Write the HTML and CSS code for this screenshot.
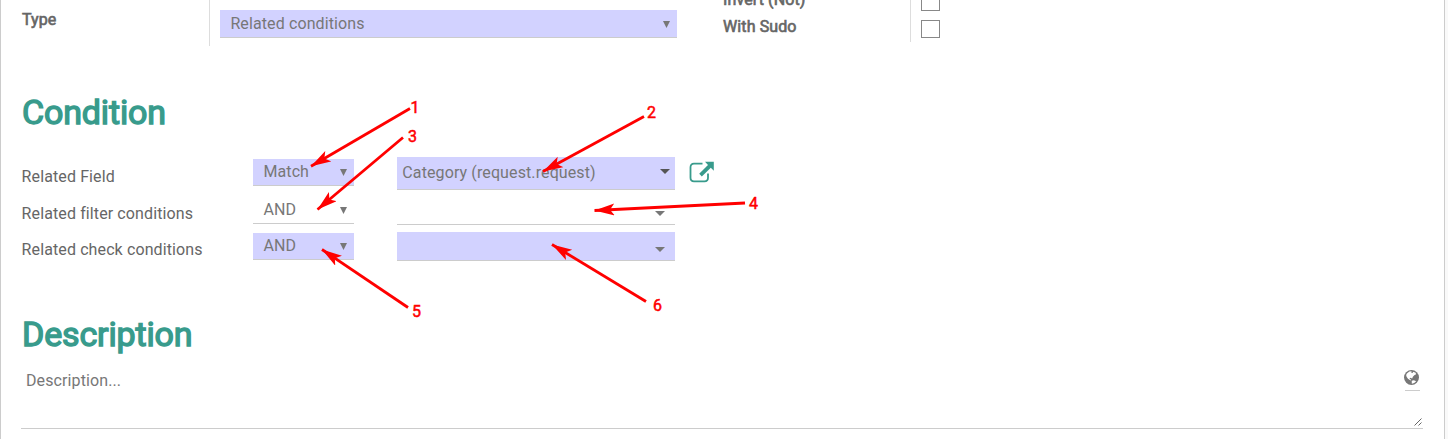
FILE: index.html
```html
<!DOCTYPE html>
<html lang="en">
<head>
<meta charset="utf-8">
<title>Condition</title>
<link rel="stylesheet" href="styles.css">
</head>
<body>
<main class="sheet">
  <section class="top">
    <div class="label type-label">Type</div>
    <div class="type-cell"><div class="select filled type-select"><span>Related conditions</span><svg class="tri" viewBox="0 0 7 7"><path d="M0 0H7L3.5 7Z"/></svg></div></div>
    <div class="flags">
      <div class="label">Invert (Not)</div>
      <div class="label">With Sudo</div>
    </div>
    <div class="checks"><span class="check"></span><span class="check"></span></div>
  </section>
  <h1 class="condition-title">Condition</h1>
  <section class="rows">
    <div class="row row-field">
      <div class="name">Related Field</div>
      <div class="select filled op"><span>Match</span><svg class="tri" viewBox="0 0 7 7"><path d="M0 0H7L3.5 7Z"/></svg></div>
      <div class="combo filled"><span>Category (request.request)</span><svg class="caret" viewBox="0 0 10 5"><path d="M0 0H10L5 5Z"/></svg></div>
      <svg class="open" viewBox="0 0 26 24"><path class="box" d="M13.500 3.700H5Q1.500 3.700 1.500 7.200V17.800Q1.500 21.300 5 21.300H15.500Q19 21.300 19 17.800V13.500"/><path class="arrow" d="M16 1.800H24.800V10.800L21.800 7.800L12.800 16.400L10.200 13.800L19 5Z"/></svg>
    </div>
    <div class="row row-filter">
      <div class="name">Related filter conditions</div>
      <div class="select op"><span>AND</span><svg class="tri" viewBox="0 0 7 7"><path d="M0 0H7L3.5 7Z"/></svg></div>
      <div class="combo"><svg class="caret" viewBox="0 0 10 5"><path d="M0 0H10L5 5Z"/></svg></div>
    </div>
    <div class="row row-check">
      <div class="name">Related check conditions</div>
      <div class="select filled op"><span>AND</span><svg class="tri" viewBox="0 0 7 7"><path d="M0 0H7L3.5 7Z"/></svg></div>
      <div class="combo filled"><svg class="caret" viewBox="0 0 10 5"><path d="M0 0H10L5 5Z"/></svg></div>
    </div>
  </section>
  <h1 class="description-title">Description</h1>
  <div class="textarea">
    <span>Description...</span>
    <div class="tools">
      <div class="translate"><svg viewBox="0 0 14 14"><circle cx="7" cy="7" r="7" class="sea"/><path class="land" d="M2.7 3.2L5 1.4L7.2 1.2L6.6 2.4L8 2.8L8.7 1.6L10.8 2.5L11.3 4L9.6 5L8.3 6.4L7.6 7.9L5.9 7.2L5.1 8L6.6 9L6.2 9.8L3.7 8.2L2.4 6.2L2 4.6ZM7.2 10L9.2 9.5L11.4 10.5L9.5 12.2L7.3 12.8Z"/></svg></div>
      <svg class="grip" viewBox="0 0 8 8"><path d="M.5 7.5L7.5 .5M4.5 7.5L7.5 4.5"/></svg>
    </div>
  </div>
</main>
<svg class="notes" viewBox="0 0 1448 439">
  <defs><marker id="head" markerUnits="userSpaceOnUse" markerWidth="22" markerHeight="14" refX="20" refY="6" orient="auto"><path d="M20 6L0 0L4.500 6L0 12Z"/></marker></defs>
  <g class="arrows">
    <path d="M410 108.500L311 166.300"/>
    <path d="M403 137.500L317.500 209.500"/>
    <path d="M644 116.500L543 171.500"/>
    <path d="M745 203L594.500 210.500"/>
    <path d="M408 307.500L322 249.500"/>
    <path d="M646 301.500L552 244.500"/>
  </g>
  <g class="digits">
    <text x="410.500" y="113">1</text><text x="408" y="142">3</text><text x="647" y="118">2</text>
    <text x="749" y="209">4</text><text x="412" y="317">5</text><text x="653" y="311">6</text>
  </g>
</svg>
</body>
</html>
```
FILE: styles.css
```css
* { box-sizing: border-box; }
body { margin: 0; height: 439px; overflow: hidden; background: #f9f9f9; font: 16px/20px Roboto, sans-serif; letter-spacing: .11px; color: #666; }
.sheet { width: 1445px; height: 439px; padding: 0 21px 0 20px; background: #fff; border-left: 1px solid #ccc; border-right: 1px solid #ccc; display: flex; flex-direction: column; }
.top { display: grid; grid-template-columns: 188px 514px 188px auto; height: 46px; align-items: start; }
.label { font-weight: 400; -webkit-text-stroke: .65px #666; line-height: 20px; }
.type-label { padding: 10px 0 0 1px; }
.type-cell { height: 46px; padding: 10px 0 0 10px; border-left: 1px solid #ddd; }
.select { display: flex; justify-content: space-between; align-items: center; padding: 0 7px 0 10.4px; border-bottom: 1px solid #ccc; color: #777; }
.filled { background: #d2d2ff; }
.type-select { width: 457px; height: 28px; padding-top: 1px; }
.tri { width: 7px; height: 7px; fill: #777; }
.flags { display: grid; gap: 7px; margin-top: -10px; }
.checks { height: 42px; padding: 0 0 0 10px; border-left: 1px solid #ddd; display: grid; align-content: start; gap: 9px; margin-left: -1px; }
.check { width: 19px; height: 18px; border: 1px solid #888; }
.check:first-child { margin-top: -7px; }
h1 { margin: 0; padding-left: 1px; font-size: 34px; line-height: 40px; font-weight: 400; letter-spacing: -.15px; color: #389b8c; -webkit-text-stroke: 1.4px #389b8c; }
.condition-title { padding-top: 46px; }
.rows { padding: 25px 0 0 1px; }
.row { display: grid; grid-template-columns: 231px 144px 278px 26px; align-items: start; }
.row-field { height: 38px; }
.row-filter { height: 37px; }
.row-check { height: 31px; }
.name { padding-top: 10px; margin-left: -.4px; }
.row-filter .name { padding-top: 9px; }
.row-check .name { padding-top: 8px; }
.op { width: 101px; height: 27px; margin-top: 2px; }
.row-check .op { margin-top: 1px; }
.combo { height: 30px; display: flex; justify-content: flex-end; align-items: center; padding: 7px 10px 0 5px; border-bottom: 1px solid #ccc; color: #777; }
.row-field .combo { height: 33px; justify-content: space-between; padding: 0 5px 0 5.3px; }
.row-field .caret { margin-top: -3px; }
.row-check .combo { height: 29px; }
.caret { width: 10px; height: 5px; fill: #777; }
.row-field .caret { fill: #555; }
.open { width: 26px; height: 24px; margin: 3px 0 0 14px; }
.box { fill: none; stroke: #389b8c; stroke-width: 1.8; }
.arrow { fill: #389b8c; }
.description-title { padding-top: 51px; }
.textarea { width: 1402px; height: 75px; padding: 17px 0 0 5px; display: flex; justify-content: space-between; border-bottom: 1px solid #ccc; color: #777; }
.tools { display: flex; flex-direction: column; align-items: flex-end; justify-content: space-between; width: 20px; padding-bottom: 2px; }
.translate { width: 15px; height: 21px; margin: -1px 3px 0 0; border-bottom: 1px solid #ccc; }
.translate svg { display: block; width: 15px; height: 15px; margin-left: -1px; }
.sea { fill: #777; }
.land { fill: #fff; }
.grip { width: 8px; height: 8px; margin-right: 1px; fill: none; stroke: #666; }
.notes { position: absolute; left: 0; top: 0; width: 1448px; height: 439px; pointer-events: none; }
.arrows path { fill: none; stroke: red; stroke-width: 2.8; marker-end: url(#head); }
#head path { fill: red; stroke: none; }
.digits { fill: red; font: 16px Roboto, sans-serif; letter-spacing: 0; stroke: red; stroke-width: .5; }
```
